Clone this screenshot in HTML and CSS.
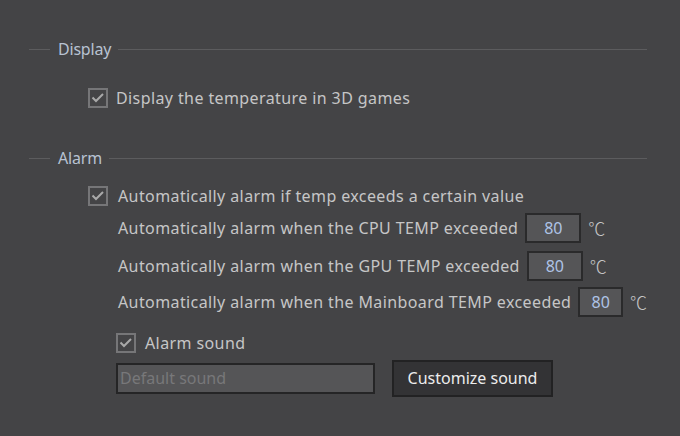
FILE: index.html
```html
<!DOCTYPE html>
<html>
<head>
<meta charset="utf-8">
<link rel="stylesheet" href="styles.css">
</head>
<body>
<div class="page">
  <div class="legend legend-display">
    <span class="line-short"></span>
    <span class="legend-text">Display</span>
    <span class="line-long"></span>
  </div>
  <div class="check-row row-display">
    <span class="checkbox"><svg viewBox="0 0 16 16" width="16" height="16"><polyline points="2.5,7.5 6,11 13,4" fill="none" stroke="#a9a9a9" stroke-width="2"/></svg></span>
    <span class="label gap8">Display the temperature in 3D games</span>
  </div>

  <div class="legend legend-alarm">
    <span class="line-short"></span>
    <span class="legend-text">Alarm</span>
    <span class="line-long"></span>
  </div>
  <div class="check-row row-alarm">
    <span class="checkbox"><svg viewBox="0 0 16 16" width="16" height="16"><polyline points="2.5,7.5 6,11 13,4" fill="none" stroke="#a9a9a9" stroke-width="2"/></svg></span>
    <span class="label gap10">Automatically alarm if temp exceeds a certain value</span>
  </div>

  <div class="sub">
    <div class="temp-row r1">
      <span class="label">Automatically alarm when the CPU TEMP exceeded</span>
      <span class="num">80</span>
      <span class="unit">℃</span>
    </div>
    <div class="temp-row r2">
      <span class="label">Automatically alarm when the GPU TEMP exceeded</span>
      <span class="num">80</span>
      <span class="unit">℃</span>
    </div>
    <div class="temp-row r3">
      <span class="label">Automatically alarm when the Mainboard TEMP exceeded</span>
      <span class="num">80</span>
      <span class="unit">℃</span>
    </div>
  </div>

  <div class="check-row row-sound">
    <span class="checkbox"><svg viewBox="0 0 16 16" width="16" height="16"><polyline points="2.5,7.5 6,11 13,4" fill="none" stroke="#a9a9a9" stroke-width="2"/></svg></span>
    <span class="label gap9">Alarm sound</span>
  </div>
  <div class="sound-row">
    <span class="sound-input">Default sound</span>
    <span class="button">Customize sound</span>
  </div>
</div>
</body>
</html>
```

FILE: styles.css
```css
html, body {
  margin: 0;
  padding: 0;
  background: #444446;
}
body {
  width: 680px;
  height: 436px;
  overflow: hidden;
  font-family: "Noto Sans", "DejaVu Sans", sans-serif;
  font-size: 16px;
  color: #c6c6c6;
}
.page {
  padding: 39px 33px 0 29px;
}
.legend {
  display: flex;
  align-items: center;
  height: 20px;
}
.line-short {
  width: 21px;
  height: 1px;
  background: #5c5c5e;
}
.line-long {
  flex: 1;
  height: 1px;
  background: #5c5c5e;
}
.legend-text {
  color: #b8c2d2;
  padding: 0 7px 0 8px;
  line-height: 20px;
  letter-spacing: -0.2px;
}
.legend-alarm {
  margin-top: 40px;
}
.check-row {
  display: flex;
  align-items: center;
  height: 20px;
}
.row-display {
  margin-top: 29px;
  padding-left: 59px;
}
.row-alarm {
  margin-top: 18px;
  padding-left: 59px;
}
.checkbox {
  width: 20px;
  height: 20px;
  box-sizing: border-box;
  border: 2px solid #767678;
  display: flex;
  align-items: center;
  justify-content: center;
  flex: none;
}
.checkbox svg {
  display: block;
  flex: none;
}
.label {
  white-space: nowrap;
  line-height: 20px;
  letter-spacing: 0.4px;
}
.gap8 { margin-left: 8px; }
.gap9 { margin-left: 9px; }
.gap10 { margin-left: 10px; }
.sub {
  padding-left: 89px;
}
.temp-row {
  display: flex;
  align-items: center;
  height: 30px;
}
.r1 { margin-top: 7px; }
.r2 { margin-top: 8px; }
.r3 { margin-top: 6px; }
.num {
  margin-left: 7px;
  width: 56px;
  height: 30px;
  box-sizing: border-box;
  background: #555557;
  border: 2px solid #2a2a2b;
  color: #aec3e6;
  text-align: center;
  line-height: 26px;
}
.unit {
  margin-left: 7px;
  color: #c6c6c6;
  font-family: "Noto Sans CJK SC", "DejaVu Sans", sans-serif;
  font-size: 17px;
  font-weight: 300;
  line-height: 20px;
}
.row-sound {
  margin-top: 16px;
  padding-left: 87px;
}
.sound-row {
  margin-top: 7px;
  padding-left: 87px;
  display: flex;
  align-items: center;
  height: 37px;
}
.sound-input {
  width: 259px;
  height: 31px;
  box-sizing: border-box;
  background: #555557;
  border: 2px solid #252526;
  color: #78787a;
  line-height: 27px;
  padding-left: 2px;
}
.button {
  margin-left: 17px;
  width: 161px;
  height: 37px;
  box-sizing: border-box;
  background: #333335;
  border: 2px solid #222223;
  color: #ececec;
  text-align: center;
  line-height: 33px;
}
```
